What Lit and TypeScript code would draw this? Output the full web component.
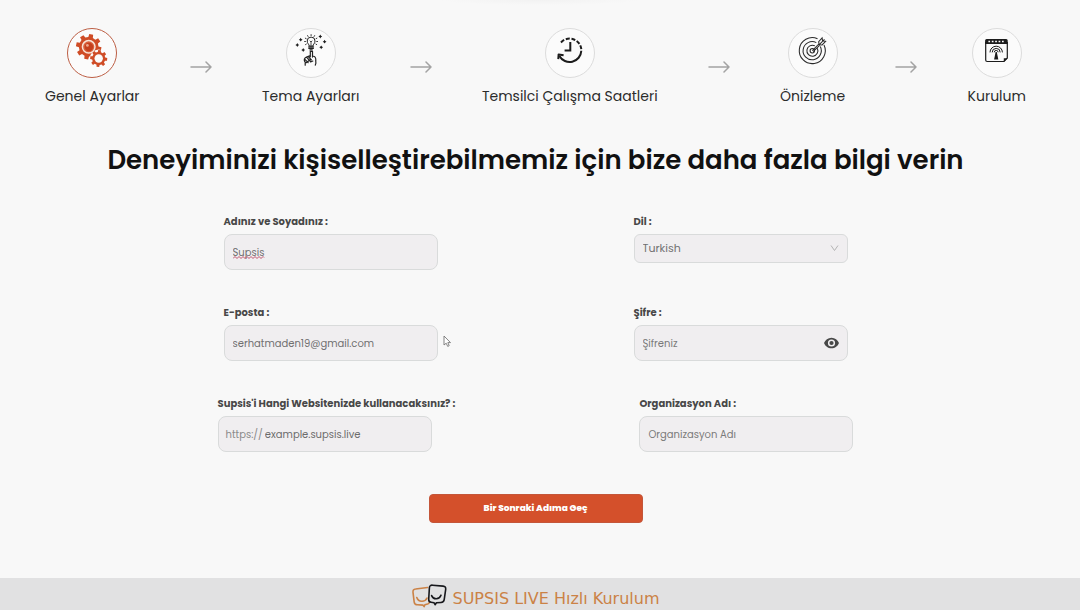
import { LitElement, html, css, svg } from "lit";
import { customElement, property, state } from "lit/decorators.js";
import { classMap } from "lit/directives/class-map.js";

/** Outline of a gear with trapezoid teeth. */
function gear(cx: number, cy: number, outer: number, root: number, teeth: number, phase = 0): string {
  const step = (Math.PI * 2) / teeth;
  const at = (r: number, a: number) =>
    `${(cx + r * Math.cos(a)).toFixed(2)} ${(cy + r * Math.sin(a)).toFixed(2)}`;
  const points: string[] = [];
  for (let i = 0; i < teeth; i++) {
    const a = phase + i * step;
    points.push(at(root, a - step * 0.3), at(outer, a - step * 0.2), at(outer, a + step * 0.2), at(root, a + step * 0.3));
  }
  return `M${points.join("L")}Z`;
}

const gearsIcon = svg`
  <path fill="#cf4c26" d=${gear(21.7, 18.8, 12.8, 9.8, 8, 0.2)} />
  <circle cx="21.7" cy="18.8" r="6.3" fill="#d9603c" stroke="#f7e3d6" stroke-width="1.5" />
  <circle cx="21.9" cy="19" r="4.2" fill="#c4401d" />
  <circle cx="20.4" cy="17.4" r="1.4" fill="#eda78e" />
  <path d="M26 23.6l3 3.4" stroke="#f7e3d6" stroke-width="2" />
  <circle cx="31.7" cy="30.5" r="9" fill="#fbfbfb" />
  <path fill="#cf4c26" d=${gear(31.7, 30.5, 8.6, 6.6, 8, 0.1)} />
  <circle cx="31.7" cy="30.5" r="4.2" fill="#fbfbfb" />`;

const sparkles = [[14.7, 11.7], [11.3, 17], [17.2, 22], [34.3, 8.5], [38.6, 13.7], [35.2, 19.3]];
const ideaIcon = svg`
  ${sparkles.map(([x, y]) => svg`<path fill="#1c1c1c" d=${`M${x} ${y - 1.9}l.7 1.2 1.2.7-1.2.7-.7 1.2-.7-1.2-1.2-.7 1.2-.7z`} />`)}
  <g fill="none" stroke="#222" stroke-linecap="round" stroke-linejoin="round">
    <path stroke-width="1" d="M23.2 17.6c0-1.4-2-2-2-4.6a3.9 3.9 0 0 1 7.8 0c0 2.600-2 3.200-2 4.600z" />
    <path stroke-width=".8" d="M24 13l1 1 1-1M25 14v3.300" />
    <path stroke-width=".9" d="M25.100 6.600v1M21.600 7.600l.5.9M28.600 7.600l-.5.9M19.300 10.200l.9.5M30.900 10.200l-.9.5M18.600 13.500h.9M30.700 13.500h.9M19.500 16.600l.8-.5M30.700 16.600l-.8-.5" />
    <path stroke-width="1.300" d="M22.700 18.900h4.800M22.900 20.400h4.400M24 21.900h2.200" />
    <path stroke-width="1.200" d="M24.300 28.800v-5.500h2.200v5.800M24.300 27.600l-3.800 1.400c-2 1-2.600 2.800-1.800 4.600M26.500 28.300c2.400-.4 3.600 1.400 3.300 4.700M20.500 29.200l4 4.300M22.200 28.500l3.200 3.300M18.900 31.400l3.200 3.300M24.800 31.200l-4.600 3.500M19.200 33.800v3.400M29.700 32.400l.2 2.800-.6 2M26.800 33l-2.200 1" />
  </g>`;

const clockIcon = svg`
  <g fill="none" stroke="#1c1c1c" stroke-width="2">
    <path d="M36.300 22.800a11.700 11.700 0 0 1-21.900 5.200" />
    <path stroke-dasharray="4 1.700" d="M36.300 21.200a11.700 11.700 0 0 0-21.300-5.500" />
    <path d="M25.300 14v8.500H19.600" />
    <path stroke-linejoin="round" d="M18.600 27.300l-5-.8-.3 4.600" />
  </g>`;

const targetIcon = svg`
  <g fill="none" stroke="#2a2a2a" stroke-width="1.050">
    <path d="M29.500 10.700a13 13 0 1 0 6.500 6.300" />
    <path d="M28.300 14.600a9.100 9.100 0 1 0 4 4" />
    <path d="M26.800 17.800a5.500 5.500 0 1 0 2.500 2.500" />
    <circle cx="24.300" cy="22.700" r="2.200" />
    <path d="M24.300 22.700l7-7.200M25.200 23.600l7.300-7.200M31 16.800l-.3-3.200 3.400-3.700.5 2.900 3 .6-3.500 3.500zM31 16.800l5.500-5.500" />
  </g>`;

const calendarIcon = svg`
  <path d="M13.700 14v18a1.500 1.500 0 0 0 1.500 1.500H32l3.300-3.600V14" fill="none" stroke="#1c1c1c" stroke-width="1.200" />
  <path fill="#1c1c1c" d="M13.100 12.500a1.500 1.500 0 0 1 1.500-1.500h19.600a1.500 1.500 0 0 1 1.500 1.500V16H13.100zM31.800 34v-3.800h3.900z" />
  <path stroke="#fff" stroke-width="1.400" stroke-dasharray="1.700 1.700" d="M16.400 13.500h16" />
  <g fill="none" stroke="#1c1c1c" stroke-width="1">
    <path d="M18 24.400a6.200 6.200 0 0 1 12.400 0M20.200 24.400a4 4 0 0 1 8 0M22.300 24.300a1.900 1.900 0 0 1 3.800 0" />
  </g>
  <path fill="#1c1c1c" d="M23.600 24h1.200l1.500 7.600h-4.200z" />`;

const steps = [
  { label: "Genel Ayarlar", icon: gearsIcon },
  { label: "Tema Ayarları", icon: ideaIcon },
  { label: "Temsilci Çalışma Saatleri", icon: clockIcon },
  { label: "Önizleme", icon: targetIcon },
  { label: "Kurulum", icon: calendarIcon },
];

@customElement("setup-steps")
class SetupSteps extends LitElement {
  @property({ type: Number }) current = 0;

  static styles = css`
    :host { display: block; }
    .steps {
      display: flex;
      justify-content: space-between;
      margin: 0;
      padding: 28px 45px 0;
      list-style: none;
    }
    .step {
      display: flex;
      flex-direction: column;
      align-items: center;
      gap: 6px;
      color: #2b2b2b;
      font-size: 14px;
      line-height: 24px;
      white-space: nowrap;
    }
    .badge {
      box-sizing: border-box;
      width: 50px;
      height: 50px;
      border: 1px solid #dcdcdc;
      border-radius: 50%;
      background: #fbfbfb;
    }
    .badge.active { border-color: #bd5f45; }
    .badge svg { display: block; margin: -1px; }
    .arrow {
      display: flex;
      align-items: center;
      padding-bottom: 2px;
    }
  `;

  render() {
    return html`<ol class="steps">
      ${steps.map(
        (step, i) => html`
          ${i > 0
            ? html`<li class="arrow" aria-hidden="true">
                <svg width="22" height="12" viewBox="0 0 22 12" fill="none" stroke="#a3a3a3" stroke-width="1.500" stroke-linecap="round" stroke-linejoin="round">
                  <path d="M1 6h20M16 1l5 5-5 5" />
                </svg>
              </li>`
            : ""}
          <li class="step">
            <span class=${classMap({ badge: true, active: i === this.current })}>
              <svg width="50" height="50" viewBox="0 0 50 50" aria-hidden="true">${step.icon}</svg>
            </span>
            <span>${step.label}</span>
          </li>
        `
      )}
    </ol>`;
  }
}

@customElement("app-root")
class AppRoot extends LitElement {
  @state() private showPassword = false;

  static styles = css`
    :host {
      display: flex;
      flex-direction: column;
      min-height: 100vh;
      background: radial-gradient(100px 5px at 50% 0, #f2f2f2, #f8f8f8);
      color: #1a1a1a;
      font-family: Poppins, Inter, sans-serif;
    }
    .main {
      flex: 1;
      display: flex;
      flex-direction: column;
      padding-right: 9px;
    }
    .title {
      margin: 32px 0 0;
      color: #111;
      font-size: 26px;
      font-weight: 600;
      line-height: 40px;
      text-align: center;
    }
    .form {
      display: flex;
      flex-direction: column;
      width: 820px;
      max-width: 100%;
      margin: 34px auto 0;
    }
    .row {
      display: flex;
      justify-content: space-around;
      min-height: 91px;
    }
    .field {
      display: flex;
      flex-direction: column;
      gap: 4px;
    }
    .label {
      color: #484848;
      font-size: 10px;
      font-weight: 700;
      line-height: 16px;
      white-space: nowrap;
    }
    .box {
      position: relative;
      box-sizing: border-box;
      display: flex;
      align-items: center;
      width: 214px;
      height: 36px;
      padding: 2px 8px 0;
      border: 1px solid #d9dbdb;
      border-radius: 8px;
      background: #f0eef0;
      color: #757575;
      font-size: 10px;
    }
    .box.short {
      height: 29px;
      padding: 0 8px 1px;
      border-radius: 6px;
      font-size: 11px;
    }
    .box.site { padding-left: 7px; }
    .input, .select {
      flex: 1;
      min-width: 0;
      height: 100%;
      margin: 0;
      padding: 0;
      border: 0;
      outline: 0;
      background: transparent;
      color: #707070;
      font: inherit;
    }
    .select { appearance: none; }
    .input::placeholder { color: #7a7a7a; opacity: 1; }
    .site .input::placeholder { color: #6c6c6c; }
    .prefix { margin-right: 2px; color: #8a8a8a; }
    .chevron { pointer-events: none; }
    .squiggle { position: absolute; left: 8px; top: 21px; }
    .eye {
      display: flex;
      padding: 0 0 2px;
      border: 0;
      background: none;
      color: #484848;
    }
    .next {
      width: 214px;
      height: 29px;
      margin: 7px auto 24px;
      border: 1px solid #c4563a;
      border-radius: 4px;
      background: #d4502b;
      color: #fff;
      font: inherit;
      font-size: 9px;
      font-weight: 800;
    }
    .footer {
      display: flex;
      align-items: center;
      justify-content: center;
      gap: 6px;
      height: 32px;
      padding: 0 9px 0 0;
      background: #e1e1e2;
      color: #cb8246;
      font-family: Verdana, "DejaVu Sans", sans-serif;
      font-size: 16px;
      line-height: 24px;
    }
    .brand { padding-top: 10px; }
    .logo { padding-top: 4px; }
    .pointer { position: absolute; left: 443px; top: 335px; }
  `;

  render() {
    return html`
      <main class="main">
        <setup-steps .current=${0}></setup-steps>
        <h1 class="title">Deneyiminizi kişiselleştirebilmemiz için bize daha fazla bilgi verin</h1>
        <form class="form" @submit=${(e: Event) => e.preventDefault()}>
          <div class="row">
            <div class="field">
              <label class="label" for="name">Adınız ve Soyadınız :</label>
              <div class="box">
                <input class="input" id="name" type="text" value="Supsis" spellcheck="false" />
                <svg class="squiggle" width="33" height="3" viewBox="0 0 33 3" fill="none" stroke="#c0506a" aria-hidden="true">
                  <path d="M0 2.500l2-2 2 2 2-2 2 2 2-2 2 2 2-2 2 2 2-2 2 2 2-2 2 2 2-2 2 2 2-2 1 1" />
                </svg>
              </div>
            </div>
            <div class="field">
              <label class="label" for="language">Dil :</label>
              <div class="box short">
                <select class="select" id="language"><option>Turkish</option></select>
                <svg class="chevron" width="9" height="8" viewBox="0 0 9 8" fill="none" stroke="#b4b4b4" aria-hidden="true">
                  <path d="M1 1.500l3.500 5 3.500-5" />
                </svg>
              </div>
            </div>
          </div>
          <div class="row">
            <div class="field">
              <label class="label" for="email">E-posta :</label>
              <div class="box">
                <input class="input" id="email" type="email" value="serhatmaden19@gmail.com" />
              </div>
            </div>
            <div class="field">
              <label class="label" for="password">Şifre :</label>
              <div class="box">
                <input class="input" id="password" type=${this.showPassword ? "text" : "password"} placeholder="Şifreniz" />
                <button class="eye" type="button" aria-label="Şifreyi göster" @click=${() => (this.showPassword = !this.showPassword)}>
                  <svg width="15" height="12" viewBox="0 0 15 12">
                    <path fill="currentColor" fill-rule="evenodd" d="M7.500.7C4 .7 1.200 2.900 0 6c1.200 3.100 4 5.300 7.500 5.300S13.800 9.100 15 6C13.800 2.900 11 .7 7.500.7zm0 8.900a3.600 3.600 0 1 1 0-7.200 3.600 3.600 0 0 1 0 7.200z" />
                    <circle cx="7.500" cy="6" r="2.100" fill="currentColor" />
                  </svg>
                </button>
              </div>
            </div>
          </div>
          <div class="row">
            <div class="field">
              <label class="label" for="website">Supsis'i Hangi Websitenizde kullanacaksınız? :</label>
              <div class="box site">
                <span class="prefix">https://</span>
                <input class="input" id="website" type="text" placeholder="example.supsis.live" />
              </div>
            </div>
            <div class="field">
              <label class="label" for="organization">Organizasyon Adı :</label>
              <div class="box">
                <input class="input" id="organization" type="text" placeholder="Organizasyon Adı" />
              </div>
            </div>
          </div>
          <button class="next" type="submit">Bir Sonraki Adıma Geç</button>
        </form>
      </main>
      <footer class="footer">
        <svg class="logo" width="35" height="24" viewBox="0 0 35 24" fill="none" stroke-width="1.600" stroke-linecap="round" stroke-linejoin="round" aria-hidden="true">
          <g stroke="#cb8246">
            <path d="M15.500 3.500L3.600 5C1.500 5.200.8 6.300 1 8.300l1.200 9.800c.3 2 1.200 2.700 3.200 2.700l5.500.3 1.200 1.500.8-1.800 2.700-.7c1-.3 1.500-.8 1.700-1.800" />
            <path d="M4.800 13.500c1.500 4.800 8.200 5.200 10.200.5" />
          </g>
          <g stroke="#17181c">
            <path d="M20.600 1.200l10.500.9c2 .2 2.800 1.200 2.600 3.200l-1.500 10.300c-.3 2-1.300 2.800-3.200 2.900l-4.600.2-1.300 2-1.100-2-2.900-.4c-1.900-.3-2.500-1.200-2.400-3.100l.7-11.400c.1-1.800 1.200-2.800 3.200-2.600z" />
            <path d="M19.600 11.600c1.800 4.400 7.600 4.200 9.400-.4" />
          </g>
        </svg>
        <span class="brand">SUPSIS LIVE Hızlı Kurulum</span>
      </footer>
      <svg class="pointer" width="9" height="13" viewBox="0 0 9 13" aria-hidden="true">
        <path d="M1 1v9l2.200-1.800 1.500 3.200 1.500-.7-1.400-3.100H7.500z" fill="#fff" stroke="#777" stroke-width=".9" />
      </svg>
    `;
  }
}
